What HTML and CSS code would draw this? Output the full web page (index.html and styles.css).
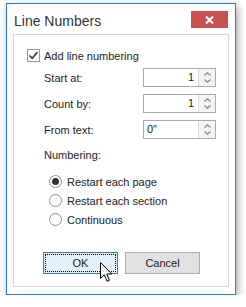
FILE: index.html
```html
<!DOCTYPE html>
<html lang="en">
<head>
  <meta charset="UTF-8">
  <title>Line Numbers</title>
  <link rel="stylesheet" href="styles.css">
</head>
<body>
  <div class="window">
    <div class="titlebar">
      <span class="title">Line Numbers</span>
      <div class="close">
        <svg width="9" height="8" viewBox="0 0 9 8"><path d="M1 0.5 L8 7.5 M8 0.5 L1 7.5" stroke="#fff" stroke-width="2"/></svg>
      </div>
    </div>

    <div class="panel">
      <div class="check-row">
        <span class="checkbox">
          <svg width="11" height="11" viewBox="0 0 11 11"><path d="M1.5 5.5 L4.2 8.3 L9.5 2" fill="none" stroke="#333" stroke-width="1.6"/></svg>
        </span>
        <span>Add line numbering</span>
      </div>

      <div class="field">
        <span class="label">Start at:</span>
        <div class="spin">
          <span class="value">1</span>
          <span class="arrows">
            <svg width="7" height="4" viewBox="0 0 7 4"><path d="M0.5 3.5 L3.5 0.8 L6.5 3.5" fill="none" stroke="#888" stroke-width="1.2"/></svg>
            <svg width="7" height="4" viewBox="0 0 7 4"><path d="M0.5 0.5 L3.5 3.2 L6.5 0.5" fill="none" stroke="#888" stroke-width="1.2"/></svg>
          </span>
        </div>
      </div>

      <div class="field">
        <span class="label">Count by:</span>
        <div class="spin">
          <span class="value">1</span>
          <span class="arrows">
            <svg width="7" height="4" viewBox="0 0 7 4"><path d="M0.5 3.5 L3.5 0.8 L6.5 3.5" fill="none" stroke="#888" stroke-width="1.2"/></svg>
            <svg width="7" height="4" viewBox="0 0 7 4"><path d="M0.5 0.5 L3.5 3.2 L6.5 0.5" fill="none" stroke="#888" stroke-width="1.2"/></svg>
          </span>
        </div>
      </div>

      <div class="field">
        <span class="label">From text:</span>
        <div class="spin">
          <span class="value left">0"</span>
          <span class="arrows">
            <svg width="7" height="4" viewBox="0 0 7 4"><path d="M0.5 3.5 L3.5 0.8 L6.5 3.5" fill="none" stroke="#888" stroke-width="1.2"/></svg>
            <svg width="7" height="4" viewBox="0 0 7 4"><path d="M0.5 0.5 L3.5 3.2 L6.5 0.5" fill="none" stroke="#888" stroke-width="1.2"/></svg>
          </span>
        </div>
      </div>

      <div class="group-label">Numbering:</div>

      <div class="radios">
        <div class="radio-row"><span class="radio checked"></span><span>Restart each page</span></div>
        <div class="radio-row"><span class="radio"></span><span>Restart each section</span></div>
        <div class="radio-row"><span class="radio"></span><span>Continuous</span></div>
      </div>

      <div class="buttons">
        <div class="btn ok">OK</div>
        <div class="btn">Cancel</div>
      </div>
    </div>
  </div>

  <!-- mouse pointer over OK -->
  <svg class="cursor" width="13" height="21" viewBox="0 0 13 21">
    <path d="M0.5 0.5 L0.5 16.5 L4.3 12.8 L7 19.3 L9.4 18.3 L6.8 12 L11.8 12 Z" fill="#fff" stroke="#000" stroke-width="1" stroke-linejoin="round"/>
  </svg>
</body>
</html>
```

FILE: styles.css
```css
body {
  margin: 0;
  background: #fff;
  font-family: "Liberation Sans", Arial, sans-serif;
  font-size: 11px;
  color: #222;
}

.window {
  margin: 3px 0 0 6px;
  width: 228px;
  height: 290px;
  border: 1px solid #2a7bd3;
  background: #fff;
  box-shadow: 2px 3px 8px rgba(0, 0, 0, 0.35);
  display: flex;
  flex-direction: column;
}

/* title bar */
.titlebar {
  height: 30px;
  display: flex;
  align-items: flex-start;
  justify-content: space-between;
}

.title {
  font-size: 14px;
  color: #333;
  margin: 9px 0 0 7px;
}

.close {
  width: 37px;
  height: 17px;
  margin: 7px 7px 0 0;
  background: #c75050;
  display: flex;
  align-items: center;
  justify-content: center;
}

/* content */
.panel {
  flex: 1;
  margin: 0 6px 7px 6px;
  border: 1px solid #d9d9d9;
  display: flex;
  flex-direction: column;
}

.check-row {
  display: flex;
  align-items: center;
  height: 13px;
  margin: 14px 0 0 13px;
}

.checkbox {
  width: 11px;
  height: 11px;
  border: 1px solid #999;
  background: #fff;
  margin-right: 4px;
  display: flex;
  align-items: center;
  justify-content: center;
}

.field {
  display: flex;
  align-items: center;
  height: 19px;
  margin: 6px 0 0 30px;
}

.field + .field {
  margin-top: 7px;
}

.label {
  width: 99px;
}

.spin {
  width: 71px;
  height: 17px;
  border: 1px solid #ababab;
  display: flex;
}

.value {
  flex: 1;
  text-align: right;
  padding-right: 4px;
  line-height: 17px;
}

.value.left {
  text-align: left;
  padding-left: 3px;
}

.arrows {
  width: 16px;
  border-left: 1px solid #dcdcdc;
  background: #f4f4f4;
  display: flex;
  flex-direction: column;
  align-items: center;
  justify-content: center;
  gap: 3px;
}

.group-label {
  margin: 9px 0 0 30px;
  line-height: 14px;
}

.radios {
  margin: 10px 0 0 35px;
}

.radio-row {
  display: flex;
  align-items: center;
  height: 19px;
}

.radio {
  width: 11px;
  height: 11px;
  border: 1px solid #8f8f8f;
  border-radius: 50%;
  margin-right: 5px;
  display: flex;
  align-items: center;
  justify-content: center;
}

.radio.checked::after {
  content: "";
  width: 7px;
  height: 7px;
  border-radius: 50%;
  background: #333;
}

.buttons {
  display: flex;
  gap: 7px;
  margin: 23px 0 0 29px;
}

.btn {
  width: 73px;
  height: 20px;
  border: 1px solid #adadad;
  background: #e1e1e1;
  line-height: 20px;
  text-align: center;
  position: relative;
}

.btn.ok {
  border-color: #3c7fb1;
  background: #e5f1fb;
}

.btn.ok::after {
  content: "";
  position: absolute;
  top: 1px;
  left: 1px;
  right: 1px;
  bottom: 1px;
  border: 1px dotted #000;
}

.cursor {
  position: absolute;
  left: 100px;
  top: 262px;
}
```
